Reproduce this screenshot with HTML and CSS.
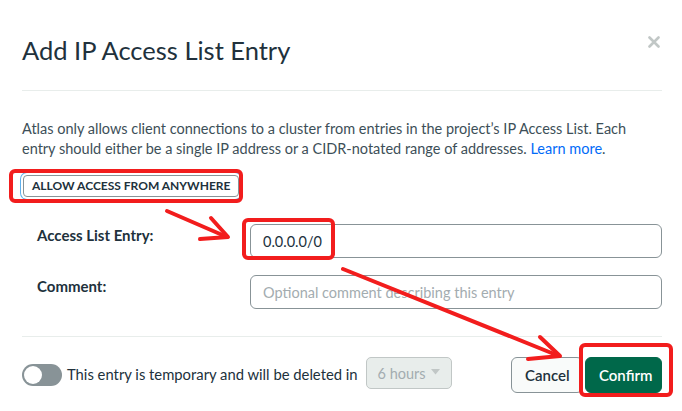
FILE: index.html
```html
<!DOCTYPE html>
<html lang="en">
<head>
<meta charset="utf-8">
<title>Add IP Access List Entry</title>
<link rel="stylesheet" href="styles.css">
</head>
<body>
<div class="modal">
  <div class="header">
    <h1 class="title">Add IP Access List Entry</h1>
    <svg class="close" width="12" height="12" viewBox="0 0 12 12" aria-label="Close">
      <path d="M1.5 1.5 L10.5 10.5 M10.5 1.5 L1.5 10.5" stroke="#c1c7c6" stroke-width="2.6" stroke-linecap="round"/>
    </svg>
  </div>
  <p class="intro">Atlas only allows client connections to a cluster from entries in the project’s IP Access List. Each entry should either be a single IP address or a CIDR-notated range of addresses. <a class="link" href="#">Learn more</a>.</p>
  <div class="allow-wrap">
    <button class="allow-btn" type="button">ALLOW ACCESS FROM ANYWHERE</button>
  </div>
  <div class="form">
    <div class="row">
      <label class="label">Access List Entry:</label>
      <div class="input">0.0.0.0/0</div>
    </div>
    <div class="row">
      <label class="label">Comment:</label>
      <div class="input placeholder">Optional comment describing this entry</div>
    </div>
  </div>
  <div class="footer">
    <div class="toggle"><span class="knob"></span></div>
    <span class="temp-text">This entry is temporary and will be deleted in</span>
    <div class="select">
      <span>6 hours</span>
      <svg class="caret" width="9" height="6" viewBox="0 0 9 6"><path d="M0 0 H9 L4.5 5.5 Z" fill="#c1c7c6"/></svg>
    </div>
    <div class="actions">
      <button class="btn cancel" type="button">Cancel</button>
      <button class="btn confirm" type="button">Confirm</button>
    </div>
  </div>
</div>
<svg class="annotations" width="682" height="411" viewBox="0 0 682 411">
  <g fill="none" stroke="#f21d1d" stroke-width="4" stroke-linecap="round" stroke-linejoin="round">
    <rect x="11" y="171" width="230" height="30" rx="4"/>
    <rect x="244" y="220" width="89" height="38" rx="4"/>
    <rect x="581" y="345" width="90" height="50" rx="4"/>
    <path d="M167 211 L227 237"/>
    <path d="M211 218 L228 237 L200 239"/>
    <path d="M343 269 L559 356"/>
    <path d="M540 337 L560 356 L528 359"/>
  </g>
</svg>
</body>
</html>
```
FILE: styles.css
```css
* { box-sizing: border-box; }
html, body {
  margin: 0;
  padding: 0;
  background: #ffffff;
}
body {
  width: 682px;
  height: 411px;
  overflow: hidden;
  position: relative;
  font-family: Lato, "Open Sans", "Liberation Sans", sans-serif;
  color: #21313c;
}
.modal {
  padding: 0 20px 0 22px;
}
.header {
  display: flex;
  justify-content: space-between;
  align-items: flex-start;
  padding-top: 35px;
  padding-bottom: 24px;
  border-bottom: 1px solid #e8edeb;
}
.title {
  margin: 0;
  font-size: 25.5px;
  line-height: 31px;
  font-weight: 400;
  color: #21313c;
}
.close {
  display: block;
  margin-top: 1px;
  margin-right: 2px;
}
.intro {
  margin: 28px 0 0;
  font-size: 14.5px;
  line-height: 20px;
  color: #3d4f58;
}
.link {
  color: #016bf8;
  text-decoration: none;
}
.allow-wrap {
  margin-top: 16px;
  padding-left: 1px;
}
.allow-btn {
  display: block;
  height: 22px;
  padding: 0 8px;
  border: 1px solid #889397;
  border-radius: 4px;
  background: #ffffff;
  box-shadow: 0 0 0 2px #ffffff, 0 0 0 3px #5fb0ec;
  font-family: Lato, "Open Sans", sans-serif;
  font-size: 12px;
  font-weight: 700;
  letter-spacing: 0;
  color: #21313c;
  line-height: 20px;
}
.form {
  margin-top: 27px;
  padding-left: 15px;
  display: flex;
  flex-direction: column;
  gap: 17px;
}
.row {
  display: flex;
  align-items: flex-start;
}
.label {
  width: 213px;
  flex: none;
  font-size: 15px;
  line-height: 20px;
  padding-top: 1px;
  font-weight: 700;
  color: #21313c;
}
.input {
  flex: 1;
  height: 34px;
  border: 1px solid #889397;
  border-radius: 6px;
  padding: 0 12px;
  display: flex;
  align-items: center;
  font-size: 14.5px;
  color: #21313c;
}
.input.placeholder {
  color: #a3acb0;
}
.footer {
  margin-top: 27px;
  border-top: 1px solid #e8edeb;
  padding-top: 20px;
  display: flex;
  align-items: center;
}
.toggle {
  width: 40px;
  height: 22px;
  border-radius: 11px;
  background: #889397;
  padding: 2px;
  flex: none;
}
.knob {
  display: block;
  width: 18px;
  height: 18px;
  border-radius: 50%;
  background: #ffffff;
}
.temp-text {
  margin-left: 5px;
  font-size: 14.8px;
  color: #21313c;
  margin-top: -3px;
}
.select {
  margin-left: 8px;
  width: 86px;
  height: 32px;
  border: 1px solid #c1c7c6;
  border-radius: 5px;
  background: #e8edeb;
  display: flex;
  align-items: center;
  justify-content: space-between;
  padding: 0 11px 0 11px;
  font-size: 14.5px;
  color: #a3acb0;
  margin-top: -4px;
}
.caret {
  display: block;
  margin-top: -2px;
}
.actions {
  margin-left: auto;
  display: flex;
  gap: 2px;
}
.btn {
  height: 36px;
  border-radius: 6px;
  font-family: Lato, "Open Sans", sans-serif;
  font-size: 15px;
  font-weight: 600;
  padding: 0 13px;
}
.cancel {
  width: 72px;
  border: 1px solid #889397;
  background: #f9fbfa;
  color: #21313c;
}
.confirm {
  width: 77px;
  border: 1px solid #00684a;
  background: #00684a;
  color: #ffffff;
}
.annotations {
  position: absolute;
  top: 0;
  left: 0;
  pointer-events: none;
}
```
